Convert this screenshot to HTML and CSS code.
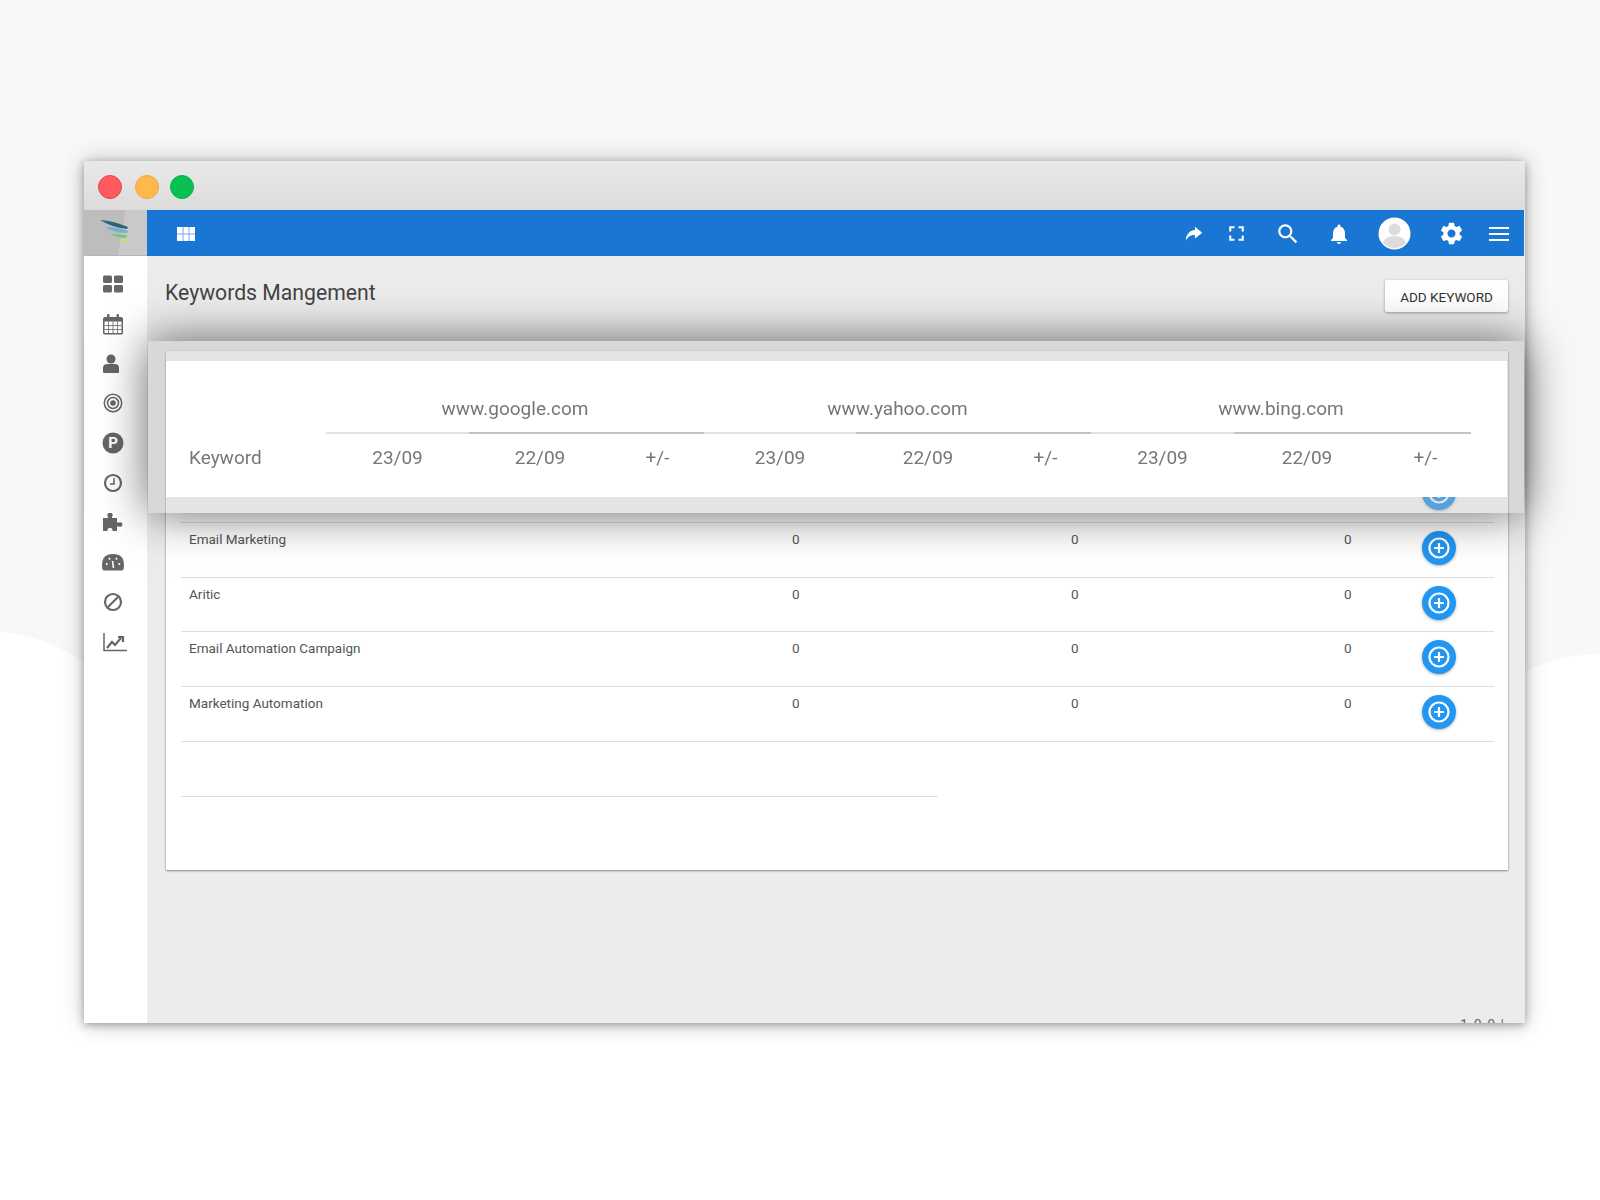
FILE: index.html
```html
<!DOCTYPE html>
<html lang="en">
<head>
    <meta charset="UTF-8">
    <meta name="viewport" content="width=device-width, initial-scale=1.0">
    <title>Keywords Mangement</title>
    <link rel="stylesheet" href="styles.css">
</head>
<body>
    <svg class="wave" width="1600" height="700" viewBox="0 0 1600 700"><path d="M0 0H1600V654Q1560 654 1525 672L84 662Q40 634 0 632Z"/></svg>

    <div class="window">
        <div class="titlebar">
            <span class="light red"></span>
            <span class="light yellow"></span>
            <span class="light green"></span>
        </div>

        <div class="app">
            <div class="sidebar">
                <div class="logo">
                    <svg width="34" height="28" viewBox="0 0 34 28">
                        <path d="M2 1Q16 2 30 8L29 10Q13 8 2 1Z" fill="#2f6478"/>
                        <path d="M7 8Q19 8 30 12L29 14Q17 14 7 8Z" fill="#6fb3d6"/>
                        <path d="M12 15Q20 15 29 16L28 19Q20 19 12 15Z" fill="#7cc47a"/>
                        <path d="M21 23L25 21L30 20L29 23Z" fill="#c4e26c"/>
                    </svg>
                </div>
                <div class="side-nav">
                    <div class="side-item">
                        <svg width="22" height="18" viewBox="0 0 22 18"><rect x="1" y="0.500" width="9" height="7.500" rx="1.500"/><rect x="12" y="0.500" width="9" height="7.500" rx="1.500"/><rect x="1" y="10" width="9" height="7.500" rx="1.500"/><rect x="12" y="10" width="9" height="7.500" rx="1.500"/></svg>
                    </div>
                    <div class="side-item">
                        <svg width="22" height="22" viewBox="0 0 22 22"><path d="M3 4H19Q21 4 21 6V20Q21 21.500 19 21.500H3Q1 21.500 1 20V6Q1 4 3 4ZM2.500 8.500V20H19.500V8.500Z" fill-rule="evenodd"/><rect x="5" y="1" width="2.500" height="5" rx="1"/><rect x="14.500" y="1" width="2.500" height="5" rx="1"/><path d="M6.500 8.500V20M11 8.500V20M15.500 8.500V20M2.500 12.500H19.500M2.500 16.500H19.500" class="line thin"/></svg>
                    </div>
                    <div class="side-item item-user">
                        <svg width="16" height="19" viewBox="0 0 16 19"><circle cx="8" cy="5" r="4.500"/><path d="M1 19Q0 19 0 17.500V14Q0 10 4.500 10H11.500Q16 10 16 14V17.500Q16 19 15 19Z"/></svg>
                    </div>
                    <div class="side-item">
                        <svg width="20" height="20" viewBox="0 0 20 20"><circle cx="10" cy="10" r="8.700" class="line"/><circle cx="10" cy="10" r="5.500" class="line"/><circle cx="10" cy="10" r="2.800"/></svg>
                    </div>
                    <div class="side-item">
                        <svg width="22" height="22" viewBox="0 0 22 22"><circle cx="11" cy="11" r="10.500"/><text x="11" y="16" class="p-mark">P</text></svg>
                    </div>
                    <div class="side-item">
                        <svg width="20" height="20" viewBox="0 0 20 20"><circle cx="10" cy="10" r="8" class="line wide"/><path d="M11 5V11H7" class="line"/></svg>
                    </div>
                    <div class="side-item">
                        <svg width="20" height="19" viewBox="0 0 20 19"><path d="M0 5H5V3.800A2.600 2.600 0 1 1 9 3.800V5H14V9.500H16A2.300 2.300 0 1 1 16 13.500H14V18H9.500V16.500A2.700 2.700 0 0 0 4.500 16.500V18H0Z"/></svg>
                    </div>
                    <div class="side-item">
                        <svg width="22" height="18" viewBox="0 0 22 18"><path d="M2 17.500Q0 17.500 0 12Q0 1 11 1Q22 1 22 12Q22 17.500 20 17.500Z"/><path d="M10.500 8L11.500 15M4 10.500L5.500 11.500M7 5L8 6.500M15 5L14 6.500M18 10.500L16.500 11.500" class="line cut"/></svg>
                    </div>
                    <div class="side-item">
                        <svg width="20" height="20" viewBox="0 0 20 20"><circle cx="10" cy="10" r="8" class="line wide"/><path d="M5 15L15 5" class="line wide"/></svg>
                    </div>
                    <div class="side-item item-chart">
                        <svg width="24" height="19" viewBox="0 0 24 19"><path d="M1 0V17.500H24" class="line"/><path d="M4 15L9 9L12 12L18 5M15 4H20V9" class="line wide"/></svg>
                    </div>
                </div>
            </div>

            <div class="main">
                <div class="topbar">
                    <svg class="grid-icon" width="18" height="14" viewBox="0 0 18 14"><path d="M0 0H18V14H0Z"/><path d="M6 0V14M12 0V14M0 7H18" class="grid-cut"/></svg>
                    <div class="top-actions">
                        <svg width="22" height="22" viewBox="0 0 24 24"><path d="M13 4L21 10.500L13 17V13C8.500 13 5.500 14.500 3 19C3 13 7 8 13 7.500Z"/></svg>
                        <svg width="25" height="25" viewBox="0 0 24 24"><path d="M7 14H5V19H10V17H7ZM5 10H7V7H10V5H5ZM17 17H14V19H19V14H17ZM14 5V7H17V10H19V5Z"/></svg>
                        <svg width="26" height="26" viewBox="0 0 24 24"><path d="M15.500 14H14.710L14.430 13.730C15.410 12.590 16 11.110 16 9.500C16 5.910 13.090 3 9.500 3S3 5.910 3 9.500S5.910 16 9.500 16C11.110 16 12.590 15.410 13.730 14.430L14 14.710V15.500L19 20.490L20.490 19ZM9.500 14C7.010 14 5 11.990 5 9.500S7.010 5 9.500 5S14 7.010 14 9.500S11.990 14 9.500 14Z"/></svg>
                        <svg width="24" height="24" viewBox="0 0 24 24"><path d="M12 22C13.100 22 14 21.100 14 20H10C10 21.100 10.890 22 12 22ZM18 16V11C18 7.930 16.360 5.360 13.500 4.680V4C13.500 3.170 12.830 2.500 12 2.500S10.500 3.170 10.500 4V4.680C7.630 5.360 6 7.920 6 11V16L4 18V19H20V18Z"/></svg>
                        <svg class="avatar" width="33" height="33" viewBox="0 0 33 33"><circle cx="16.500" cy="16.500" r="16"/><circle cx="16.500" cy="12.500" r="6" class="avatar-fill"/><path d="M5 26Q7 19 16.500 19Q26 19 28 26Q23 31 16.500 31Q10 31 5 26Z" class="avatar-fill"/></svg>
                        <svg width="27" height="27" viewBox="0 0 24 24"><path fill-rule="evenodd" d="M19.140 12.940C19.180 12.640 19.200 12.330 19.200 12C19.200 11.680 19.180 11.360 19.130 11.060L21.160 9.480C21.340 9.340 21.390 9.070 21.280 8.870L19.360 5.550C19.240 5.330 18.990 5.260 18.770 5.330L16.380 6.290C15.880 5.910 15.350 5.590 14.760 5.350L14.400 2.810C14.360 2.570 14.160 2.400 13.920 2.400H10.080C9.840 2.400 9.650 2.570 9.610 2.810L9.250 5.350C8.660 5.590 8.120 5.920 7.630 6.290L5.240 5.330C5.020 5.250 4.770 5.330 4.650 5.550L2.740 8.870C2.620 9.080 2.660 9.340 2.860 9.480L4.890 11.060C4.840 11.360 4.800 11.690 4.800 12S4.820 12.640 4.870 12.940L2.840 14.520C2.660 14.660 2.610 14.930 2.720 15.130L4.640 18.450C4.760 18.670 5.010 18.740 5.230 18.670L7.620 17.710C8.120 18.090 8.650 18.410 9.240 18.650L9.600 21.190C9.650 21.430 9.840 21.600 10.080 21.600H13.920C14.160 21.600 14.360 21.430 14.390 21.190L14.750 18.650C15.340 18.410 15.880 18.090 16.370 17.710L18.760 18.670C18.980 18.750 19.230 18.670 19.350 18.450L21.270 15.130C21.390 14.910 21.340 14.660 21.150 14.520ZM12 15.600C10.020 15.600 8.400 13.980 8.400 12S10.020 8.400 12 8.400S15.600 10.020 15.600 12S13.980 15.600 12 15.600Z"/></svg>
                        <svg width="20" height="16" viewBox="0 0 20 16"><path d="M0 2H20M0 8H20M0 14H20" class="menu-lines"/></svg>
                    </div>
                </div>

                <div class="content">
                    <div class="page-head">
                        <h1>Keywords Mangement</h1>
                        <button type="button" class="add-btn">ADD KEYWORD</button>
                    </div>

                    <div class="card">
                        <div class="row">
                            <span></span><span></span><span></span><span></span>
                            <button type="button" class="plus-btn"><svg width="22" height="22" viewBox="0 0 22 22"><circle cx="11" cy="11" r="9.500"/><path d="M11 6V16M6 11H16"/></svg></button>
                        </div>
                        <div class="row">
                            <span>Email Marketing</span><span>0</span><span>0</span><span>0</span>
                            <button type="button" class="plus-btn"><svg width="22" height="22" viewBox="0 0 22 22"><circle cx="11" cy="11" r="9.500"/><path d="M11 6V16M6 11H16"/></svg></button>
                        </div>
                        <div class="row">
                            <span>Aritic</span><span>0</span><span>0</span><span>0</span>
                            <button type="button" class="plus-btn"><svg width="22" height="22" viewBox="0 0 22 22"><circle cx="11" cy="11" r="9.500"/><path d="M11 6V16M6 11H16"/></svg></button>
                        </div>
                        <div class="row">
                            <span>Email Automation Campaign</span><span>0</span><span>0</span><span>0</span>
                            <button type="button" class="plus-btn"><svg width="22" height="22" viewBox="0 0 22 22"><circle cx="11" cy="11" r="9.500"/><path d="M11 6V16M6 11H16"/></svg></button>
                        </div>
                        <div class="row">
                            <span>Marketing Automation</span><span>0</span><span>0</span><span>0</span>
                            <button type="button" class="plus-btn"><svg width="22" height="22" viewBox="0 0 22 22"><circle cx="11" cy="11" r="9.500"/><path d="M11 6V16M6 11H16"/></svg></button>
                        </div>
                        <div class="row-short"></div>
                    </div>

                    <div class="version">1.0.0 |</div>
                </div>
            </div>
        </div>

        <div class="sticky-head">
            <div class="head-grid">
                <div class="keyword-cell">Keyword</div>
                <div class="site site-1">www.google.com</div>
                <div class="site site-2">www.yahoo.com</div>
                <div class="site site-3">www.bing.com</div>
                <div class="date first">23/09</div>
                <div class="date">22/09</div>
                <div class="date">+/-</div>
                <div class="date first">23/09</div>
                <div class="date">22/09</div>
                <div class="date">+/-</div>
                <div class="date first">23/09</div>
                <div class="date">22/09</div>
                <div class="date">+/-</div>
            </div>
        </div>
    </div>
</body>
</html>
```

FILE: styles.css
```css
* {
    margin: 0;
    padding: 0;
    box-sizing: border-box;
}

body {
    font-family: Roboto, "Liberation Sans", sans-serif;
    background: #ffffff;
    height: 1200px;
    padding: 161px 0 0 84px;
    overflow: hidden;
    color: #555;
}

.wave {
    position: absolute;
    left: 0;
    top: 0;
    fill: #f8f8f8;
}

.window {
    position: relative;
    width: 1441px;
    height: 862px;
    background: #fff;
    box-shadow: 0 0 22px rgba(0, 0, 0, 0.24), 0 2px 8px rgba(0, 0, 0, 0.3);
    display: flex;
    flex-direction: column;
}

.titlebar {
    height: 49px;
    background: linear-gradient(180deg, #e9e9e9 0%, #dcdcdc 100%);
    display: flex;
    align-items: center;
    padding: 2px 0 0 14px;
}

.light {
    width: 24px;
    height: 24px;
    border-radius: 50%;
    margin-right: 12px;
    border: 1px solid;
}

.red { background: #ff5b5e; border-color: #e5474c; margin-right: 13px; }
.yellow { background: #ffb84a; border-color: #f0a53a; margin-right: 11px; }
.green { background: #09c152; border-color: #06b049; }

.app {
    flex: 1;
    display: flex;
    min-height: 0;
}

.sidebar {
    width: 63px;
    background: #fff;
    flex-shrink: 0;
}

.logo {
    height: 46px;
    background: linear-gradient(100deg, #bdbdbd 0%, #bdbdbd 58%, #c9c9c9 60%, #c9c9c9 100%);
    display: flex;
    align-items: center;
    justify-content: center;
    padding-right: 2px;
    border-bottom: 1px solid #b5b5b5;
}

.side-nav {
    display: flex;
    flex-direction: column;
    padding: 8px 5px 0 0;
}

.side-item {
    height: 39.800px;
    display: flex;
    align-items: center;
    justify-content: center;
    fill: #666;
}

.item-user { padding-right: 5px; }
.item-chart { padding-left: 3px; }

.line {
    fill: none;
    stroke: #666;
    stroke-width: 1.500;
}

.line.thin { stroke-width: 0.800; }
.line.wide { stroke-width: 2.200; }
.line.cut { stroke: #fff; stroke-width: 1.600; }

.p-mark {
    fill: #fff;
    font-size: 15px;
    font-weight: 700;
    text-anchor: middle;
}

.main {
    flex: 1;
    min-width: 0;
    background: #ececec;
    display: flex;
    flex-direction: column;
    overflow: hidden;
}

.topbar {
    height: 46px;
    flex-shrink: 0;
    margin-right: 1px;
    background: #1976d2;
    display: flex;
    align-items: center;
    justify-content: space-between;
    padding: 1px 0 0 30px;
    fill: #fff;
}

.grid-cut {
    stroke: #1976d2;
    stroke-width: 1;
    opacity: 0.6;
}

.top-actions {
    display: grid;
    grid-template-columns: 42px 43px 59px 44px 66px 48px 47px;
    justify-items: center;
    align-items: center;
    padding-right: 2px;
}

.avatar {
    fill: #fff;
}

.avatar-fill {
    fill: #dcdcdc;
}

.menu-lines {
    fill: none;
    stroke: #fff;
    stroke-width: 1.800;
}

.content {
    flex: 1;
    padding: 24px 17px 0 19px;
}

.page-head {
    display: flex;
    justify-content: space-between;
    align-items: center;
    height: 32px;
    margin-bottom: 39px;
}

h1 {
    font-size: 21.200px;
    font-weight: 400;
    color: #444;
    margin: -7px 0 0 -1px;
}

.add-btn {
    width: 123px;
    height: 32px;
    border: none;
    border-radius: 2px;
    background: #fff;
    font-family: Roboto, sans-serif;
    font-size: 13.500px;
    font-weight: 400;
    color: #333;
    padding-top: 1px;
    box-shadow: 0 1px 3px rgba(0, 0, 0, 0.35);
}

.card {
    background: #fff;
    height: 519px;
    padding: 117px 14px 0 15px;
    box-shadow: 0 1px 2px rgba(0, 0, 0, 0.4), 0 0 1px rgba(0, 0, 0, 0.3);
}

.row {
    display: grid;
    grid-template-columns: 611px 279px 273px 78px 34px;
    height: 54.800px;
    padding-top: 8px;
    border-bottom: 1px solid #ddd;
    font-size: 13.500px;
    line-height: 17px;
    color: #555;
}

.row span:first-child {
    padding-left: 8px;
}

.row-short {
    width: 757px;
    height: 54.800px;
    border-bottom: 1px solid #ddd;
}

.plus-btn {
    width: 34px;
    height: 34px;
    border: none;
    border-radius: 50%;
    background: #2196f3;
    box-shadow: 0 1px 3px rgba(0, 0, 0, 0.3);
    display: flex;
    align-items: center;
    justify-content: center;
}

.plus-btn svg {
    fill: none;
    stroke: #fff;
    stroke-width: 2.200;
}

.version {
    margin-top: 148px;
    font-size: 14px;
    line-height: 15px;
    letter-spacing: 1px;
    text-align: right;
    padding-right: 3px;
    color: #666;
}

.sticky-head {
    position: absolute;
    left: 64px;
    top: 180px;
    width: 1376px;
    height: 172px;
    padding: 20px 17px 16px 18px;
    background: rgba(180, 180, 180, 0.36);
    box-shadow: 0 0 44px rgba(0, 0, 0, 0.6);
}

.head-grid {
    height: 100%;
    background: #fff;
    display: grid;
    grid-template-columns: 160px 143px 142px 93px 152px 144px 91px 143px 146px 91px;
    grid-template-rows: 71px 44px;
    color: #777;
    font-size: 19px;
    filter: blur(0.300px);
}

.keyword-cell {
    grid-row: 2;
    grid-column: 1;
    padding: 14px 0 0 23px;
    line-height: 24px;
}

.site {
    grid-row: 1;
    text-align: center;
    align-self: end;
    line-height: 24px;
    padding-bottom: 11px;
}

.site-1 { grid-column: 2 / 5; }
.site-2 { grid-column: 5 / 8; }
.site-3 { grid-column: 8 / 11; }

.date {
    grid-row: 2;
    text-align: center;
    border-top: 2px solid #c4c4c4;
    padding-top: 12px;
    line-height: 24px;
}

.date.first {
    border-top-color: #e2e2e2;
}
```
